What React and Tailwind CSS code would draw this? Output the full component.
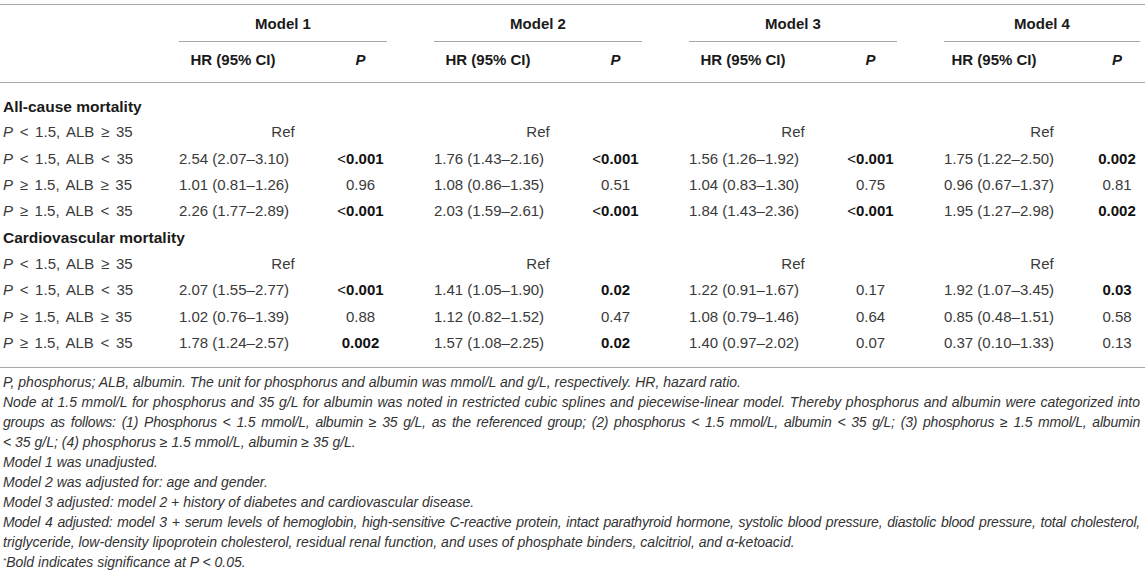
import React from "react";

const COLS = "grid grid-cols-[179px_108px_147px_108px_147px_108px_147px_100px_101px]";

const LT = "<";
const GE = "≥";

const sections = [
  {
    title: "All-cause mortality",
    rows: [
      { op1: LT, op2: GE, ref: true },
      {
        op1: LT,
        op2: LT,
        vals: [
          ["2.54 (2.07–3.10)", "<0.001", true],
          ["1.76 (1.43–2.16)", "<0.001", true],
          ["1.56 (1.26–1.92)", "<0.001", true],
          ["1.75 (1.22–2.50)", "0.002", true],
        ],
      },
      {
        op1: GE,
        op2: GE,
        vals: [
          ["1.01 (0.81–1.26)", "0.96", false],
          ["1.08 (0.86–1.35)", "0.51", false],
          ["1.04 (0.83–1.30)", "0.75", false],
          ["0.96 (0.67–1.37)", "0.81", false],
        ],
      },
      {
        op1: GE,
        op2: LT,
        vals: [
          ["2.26 (1.77–2.89)", "<0.001", true],
          ["2.03 (1.59–2.61)", "<0.001", true],
          ["1.84 (1.43–2.36)", "<0.001", true],
          ["1.95 (1.27–2.98)", "0.002", true],
        ],
      },
    ],
  },
  {
    title: "Cardiovascular mortality",
    rows: [
      { op1: LT, op2: GE, ref: true },
      {
        op1: LT,
        op2: LT,
        vals: [
          ["2.07 (1.55–2.77)", "<0.001", true],
          ["1.41 (1.05–1.90)", "0.02", true],
          ["1.22 (0.91–1.67)", "0.17", false],
          ["1.92 (1.07–3.45)", "0.03", true],
        ],
      },
      {
        op1: GE,
        op2: GE,
        vals: [
          ["1.02 (0.76–1.39)", "0.88", false],
          ["1.12 (0.82–1.52)", "0.47", false],
          ["1.08 (0.79–1.46)", "0.64", false],
          ["0.85 (0.48–1.51)", "0.58", false],
        ],
      },
      {
        op1: GE,
        op2: LT,
        vals: [
          ["1.78 (1.24–2.57)", "0.002", true],
          ["1.57 (1.08–2.25)", "0.02", true],
          ["1.40 (0.97–2.02)", "0.07", false],
          ["0.37 (0.10–1.33)", "0.13", false],
        ],
      },
    ],
  },
];

function PVal({ v, bold }) {
  if (!bold) return <span>{v}</span>;
  if (v.startsWith("<")) {
    return (
      <span className="font-bold text-[#111]">
        <span className="font-normal">&lt;</span>
        {v.slice(1)}
      </span>
    );
  }
  return <span className="font-bold text-[#111]">{v}</span>;
}

function Label({ op1, op2 }) {
  return (
    <div className="pl-[3px] whitespace-nowrap [word-spacing:2.5px]">
      <span className="italic">P</span> {op1} 1.5, ALB {op2} 35
    </div>
  );
}

function RefCell({ w }) {
  return (
    <div className="col-span-2">
      <div className={w === 196 ? "w-[196px] text-center" : "w-[208px] text-center"}>Ref</div>
    </div>
  );
}

export default function App() {
  return (
    <div
      className="w-[1145px] h-[574px] bg-white pt-[4px] text-[15px] text-[#3a3a3a] overflow-hidden"
      style={{ fontFamily: '"Liberation Sans", Arial, sans-serif' }}
    >
      {/* Header row 1 */}
      <div className={`${COLS} border-t border-[#a8a8a8]`}>
        <div />
        {["Model 1", "Model 2", "Model 3"].map((m) => (
          <div key={m} className="col-span-2">
            <div className="w-[208px] h-[37px] pt-[9px] leading-[20px] text-center font-bold text-[#1a1a1a] border-b border-[#a8a8a8]">
              {m}
            </div>
          </div>
        ))}
        <div className="col-span-2">
          <div className="w-[196px] h-[37px] pt-[9px] leading-[20px] text-center font-bold text-[#1a1a1a] border-b border-[#a8a8a8]">
            Model 4
          </div>
        </div>
      </div>

      {/* Header row 2 */}
      <div className={`${COLS} h-[41px] pt-[8px] leading-[20px] font-bold text-[#1a1a1a] border-b border-[#a8a8a8]`}>
        <div />
        <div className="text-center">HR (95% CI)</div>
        <div className="text-center italic">P</div>
        <div className="text-center">HR (95% CI)</div>
        <div className="text-center italic">P</div>
        <div className="text-center">HR (95% CI)</div>
        <div className="text-center italic">P</div>
        <div className="text-center">HR (95% CI)</div>
        <div className="text-center italic pl-[45px]">P</div>
      </div>

      {/* Body */}
      <div className="pt-[10px] pb-[11px] border-b border-[#a8a8a8]">
        {sections.map((s) => (
          <React.Fragment key={s.title}>
            <div className="h-[26.33px] flex items-center pl-[3px] text-[15.5px] font-bold text-[#1a1a1a]">{s.title}</div>
            {s.rows.map((r, i) => (
              <div key={i} className={`${COLS} h-[26.33px] items-center`}>
                <Label op1={r.op1} op2={r.op2} />
                {r.ref ? (
                  <>
                    <RefCell w={208} />
                    <RefCell w={208} />
                    <RefCell w={208} />
                    <RefCell w={196} />
                  </>
                ) : (
                  r.vals.map((v, j) => (
                    <React.Fragment key={j}>
                      <div className="text-center whitespace-nowrap">{v[0]}</div>
                      <div className={j === 3 ? "text-center pl-[45px]" : "text-center"}>
                        <PVal v={v[1]} bold={v[2]} />
                      </div>
                    </React.Fragment>
                  ))
                )}
              </div>
            ))}
          </React.Fragment>
        ))}
      </div>

      {/* Footnotes */}
      <div className="pt-[4px] pl-[3px] pr-[5px] text-[14px] leading-[20px] italic text-[#333]">
        <p className="whitespace-nowrap">
          P, phosphorus; ALB, albumin. The unit for phosphorus and albumin was mmol/L and g/L, respectively. HR, hazard ratio.
        </p>
        <p className="whitespace-nowrap text-justify [text-align-last:justify]">
          Node at 1.5 mmol/L for phosphorus and 35 g/L for albumin was noted in restricted cubic splines and piecewise-linear model. Thereby phosphorus and albumin were categorized into
        </p>
        <p className="whitespace-nowrap text-justify [text-align-last:justify] tracking-[-0.2px]">
          groups as follows: (1) Phosphorus &lt; 1.5 mmol/L, albumin ≥ 35 g/L, as the referenced group; (2) phosphorus &lt; 1.5 mmol/L, albumin &lt; 35 g/L; (3) phosphorus ≥ 1.5 mmol/L, albumin
        </p>
        <p className="whitespace-nowrap">&lt; 35 g/L; (4) phosphorus ≥ 1.5 mmol/L, albumin ≥ 35 g/L.</p>
        <p>Model 1 was unadjusted.</p>
        <p>Model 2 was adjusted for: age and gender.</p>
        <p>Model 3 adjusted: model 2 + history of diabetes and cardiovascular disease.</p>
        <p className="whitespace-nowrap text-justify [text-align-last:justify] tracking-[-0.2px]">
          Model 4 adjusted: model 3 + serum levels of hemoglobin, high-sensitive C-reactive protein, intact parathyroid hormone, systolic blood pressure, diastolic blood pressure, total cholesterol,
        </p>
        <p className="whitespace-nowrap">
          triglyceride, low-density lipoprotein cholesterol, residual renal function, and uses of phosphate binders, calcitriol, and α-ketoacid.
        </p>
        <p>
          <sup className="text-[8px]">*</sup>Bold indicates significance at P &lt; 0.05.
        </p>
      </div>
    </div>
  );
}
